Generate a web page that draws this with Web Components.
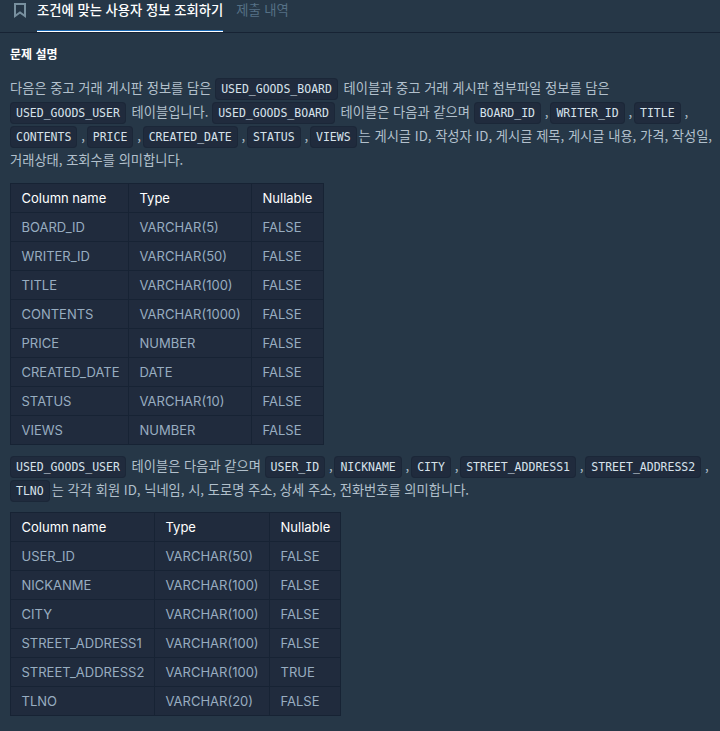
<!DOCTYPE html>
<html lang="ko"><head><meta charset="utf-8"><title>조건에 맞는 사용자 정보 조회하기</title>
<style>
html,body{margin:0;padding:0;background:#263747;height:100%}
body{overflow:hidden;font-family:"Noto Sans CJK KR","Noto Sans",sans-serif}
</style></head><body>
<problem-page></problem-page>
<script>
class TabBar extends HTMLElement{constructor(){super();this.attachShadow({mode:'open'}).innerHTML=`<style>
:host{display:flex;height:32px;border-bottom:1px solid #172334;box-sizing:content-box;font:500 13.3px/1 "Noto Sans CJK KR",sans-serif}
.ic{width:37px;padding:2px 0 0 13px;box-sizing:border-box}
.tab{height:32px;box-sizing:border-box;line-height:19px;color:#fff;position:relative}
.tab.a::after{content:"";position:absolute;left:0;right:0;bottom:0;height:2px;background:linear-gradient(#1b6cb8 0 1px,#fff 1px)}
.o{color:#557085;font-weight:400;margin-left:13px}
svg{display:block}
</style><div class="ic"><svg width="14" height="16" viewBox="0 0 14 16" fill="none" stroke="#78909f" stroke-width="2"><path d="M2 2h10v12l-5-3.500-5 3.500z"/></svg></div><div class="tab a">조건에 맞는 사용자 정보 조회하기</div><div class="tab o">제출 내역</div>`}}
customElements.define('tab-bar',TabBar);
class CodeChip extends HTMLElement{constructor(){super();this.attachShadow({mode:'open'}).innerHTML=`<style>
:host{display:inline;font:11.5px/1 "DejaVu Sans Mono",monospace;color:#d7e2eb;background:#202b3d;border:1px solid #1b2738;border-radius:4px;padding:3px 5px;margin-right:2px}
</style><slot></slot>`}}
customElements.define('code-chip',CodeChip);
class DataTable extends HTMLElement{constructor(){super();const rows=JSON.parse(this.getAttribute('rows'));const w=this.getAttribute('cols').split(',').map(Number);
const cell=(t,c)=>`<${c}>${t}</${c}>`;
this.attachShadow({mode:'open'}).innerHTML=`<style>
:host{display:block;font:13px/20px Inter,sans-serif}
table{border-collapse:collapse;table-layout:fixed;background:#202b3d;border:1px solid #172334;width:${w[0]+w[1]+w[2]}px}
th,td{border:1px solid #172334;padding:4px 10.5px;height:20px;text-align:left;white-space:nowrap}
th{font-weight:400;color:#fff}td{color:#98adc0}
</style><table><colgroup>${w.map(x=>`<col style="width:${x}px">`).join('')}</colgroup><thead><tr>${['Column name','Type','Nullable'].map(t=>cell(t,'th')).join('')}</tr></thead><tbody>${rows.map(r=>'<tr>'+r.map(t=>cell(t,'td')).join('')+'</tr>').join('')}</tbody></table>`}}
customElements.define('data-table',DataTable);
class ProblemPage extends HTMLElement{constructor(){super();const t1=[["BOARD_ID","VARCHAR(5)","FALSE"],["WRITER_ID","VARCHAR(50)","FALSE"],["TITLE","VARCHAR(100)","FALSE"],["CONTENTS","VARCHAR(1000)","FALSE"],["PRICE","NUMBER","FALSE"],["CREATED_DATE","DATE","FALSE"],["STATUS","VARCHAR(10)","FALSE"],["VIEWS","NUMBER","FALSE"]];
const t2=[["USER_ID","VARCHAR(50)","FALSE"],["NICKANME","VARCHAR(100)","FALSE"],["CITY","VARCHAR(100)","FALSE"],["STREET_ADDRESS1","VARCHAR(100)","FALSE"],["STREET_ADDRESS2","VARCHAR(100)","TRUE"],["TLNO","VARCHAR(20)","FALSE"]];
const c='<span class="c"> , </span>';
this.attachShadow({mode:'open'}).innerHTML=`<style>
:host{display:block;color:#b2c0cc;font:13.26px/24px "Noto Sans CJK KR",sans-serif}
main{padding:0 0 0 10px}
h5{margin:0;color:#fff;font:700 12px/18px "Noto Sans CJK KR",sans-serif;padding-top:12px}
p{margin:0}
.c{word-spacing:-1.9px}
.p1{margin-top:13px}
data-table{margin-top:11px}
.p2{margin-top:9px}
.t2{margin-top:10px}
</style><tab-bar></tab-bar><main><h5>문제 설명</h5>
<p class="p1">다음은 중고 거래 게시판 정보를 담은 <code-chip>USED_GOODS_BOARD</code-chip> 테이블과 중고 거래 게시판 첨부파일 정보를 담은 <code-chip>USED_GOODS_USER</code-chip> 테이블입니다. <code-chip>USED_GOODS_BOARD</code-chip> 테이블은 다음과 같으며 <code-chip>BOARD_ID</code-chip>${c}<code-chip>WRITER_ID</code-chip>${c}<code-chip>TITLE</code-chip>${c}<code-chip>CONTENTS</code-chip>${c}<code-chip>PRICE</code-chip>${c}<code-chip>CREATED_DATE</code-chip>${c}<code-chip>STATUS</code-chip>${c}<code-chip>VIEWS</code-chip>는 게시글 ID, 작성자 ID, 게시글 제목, 게시글 내용, 가격, 작성일,<br>거래상태, 조회수를 의미합니다.</p>
<data-table cols="118,123,72" rows='${JSON.stringify(t1)}'></data-table>
<p class="p2"><code-chip>USED_GOODS_USER</code-chip> 테이블은 다음과 같으며 <code-chip>USER_ID</code-chip>${c}<code-chip>NICKNAME</code-chip>${c}<code-chip>CITY</code-chip>${c}<code-chip>STREET_ADDRESS1</code-chip>${c}<code-chip>STREET_ADDRESS2</code-chip>${c}<code-chip>TLNO</code-chip>는 각각 회원 ID, 닉네임, 시, 도로명 주소, 상세 주소, 전화번호를 의미합니다.</p>
<data-table class="t2" cols="144,115,71" rows='${JSON.stringify(t2)}'></data-table></main>`}}
customElements.define('problem-page',ProblemPage);
</script></body></html>
